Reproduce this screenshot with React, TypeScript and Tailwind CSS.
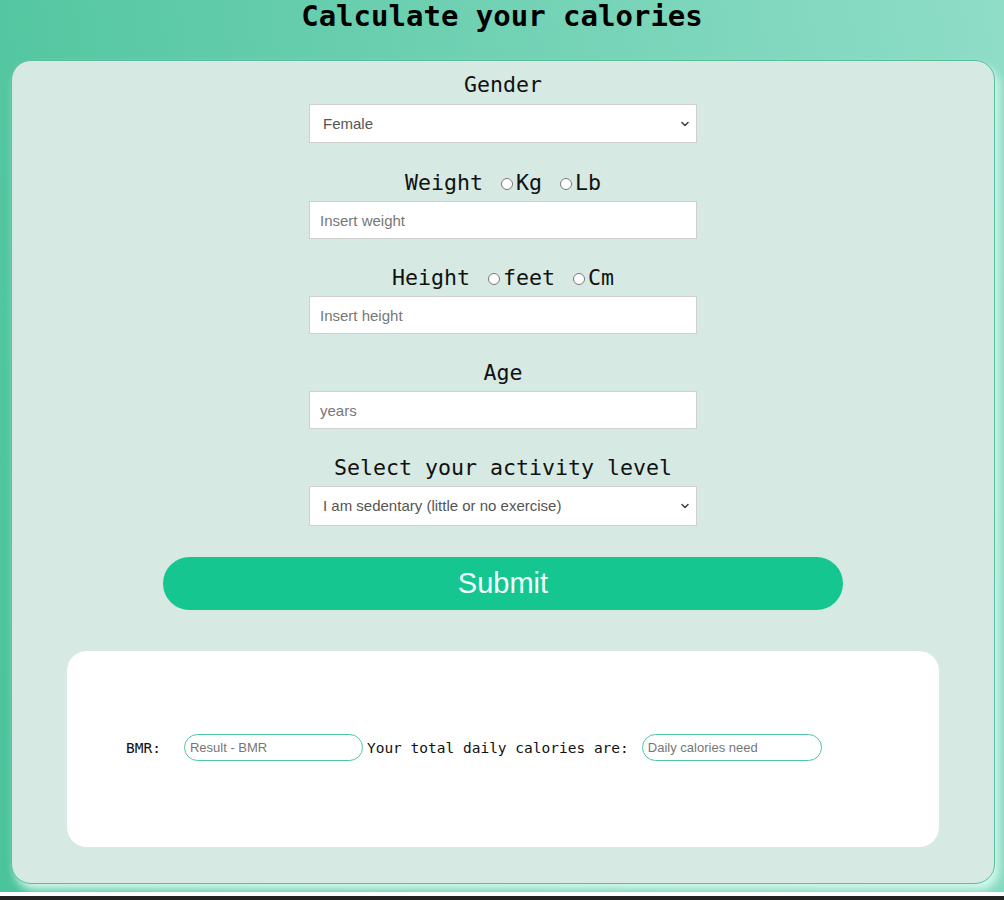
import React from 'react';

const mono = "font-['DejaVu_Sans_Mono',monospace]";
const sans = "font-['Liberation_Sans',Arial,sans-serif]";

const Chevron: React.FC = () => (
  <svg
    className="pointer-events-none absolute right-[7px] top-1/2 -translate-y-1/2"
    width="10"
    height="10"
    viewBox="0 0 10 10"
    fill="none"
  >
    <path d="M2 3.5 L5 6.5 L8 3.5" stroke="#444" strokeWidth="1.6" strokeLinecap="round" strokeLinejoin="round" />
  </svg>
);

const Radio: React.FC<{ name: string; label: string }> = ({ name, label }) => (
  <label className="inline-flex items-center">
    <input type="radio" name={name} className="m-0 ml-[5px] mr-[3px] h-[12px] w-[12px] translate-y-[1px]" />
    <span>{label}</span>
  </label>
);

const App: React.FC = () => {
  return (
    <div className="flex h-[900px] flex-col overflow-hidden">
      <div className="h-[892px] shrink-0 overflow-hidden bg-linear-[80deg] from-[#4bc39b] to-[#8fddc7]">
        <h1 className={`${mono} m-0 h-[30px] pt-[1px] text-center text-[29px] font-bold leading-[30px] text-black`}>
          Calculate your calories
        </h1>

        <div className="ml-[11px] mt-[30px] h-[824px] w-[984px] rounded-[20px] border border-[#5bbf9d] bg-[#d6e9e3] pt-[11px] shadow-[4px_6px_8px_rgba(215,250,238,0.95)]">
          <div className={`${mono} flex flex-col items-center text-[21.6px] leading-[26px] text-[#111]`}>
            {/* Gender */}
            <div>Gender</div>
            <div className="relative mt-[6px]">
              <select className={`${sans} h-[39px] w-[388px] appearance-none border border-[#cfcfcf] bg-white pl-[13px] text-[15px] text-[#555] outline-none`}>
                <option>Female</option>
                <option>Male</option>
              </select>
              <Chevron />
            </div>

            {/* Weight */}
            <div className="mt-[27px] flex items-center">
              <span>Weight</span>
              <span className="w-[13px]" />
              <Radio name="weight" label="Kg" />
              <span className="w-[13px]" />
              <Radio name="weight" label="Lb" />
            </div>
            <input
              placeholder="Insert weight"
              className={`${sans} mt-[5px] h-[38px] w-[388px] border border-[#cfcfcf] bg-white pl-[10px] text-[15px] text-[#333] outline-none placeholder:text-[#777]`}
            />

            {/* Height */}
            <div className="mt-[26px] flex items-center">
              <span>Height</span>
              <span className="w-[13px]" />
              <Radio name="height" label="feet" />
              <span className="w-[13px]" />
              <Radio name="height" label="Cm" />
            </div>
            <input
              placeholder="Insert height"
              className={`${sans} mt-[5px] h-[38px] w-[388px] border border-[#cfcfcf] bg-white pl-[10px] text-[15px] text-[#333] outline-none placeholder:text-[#777]`}
            />

            {/* Age */}
            <div className="mt-[26px]">Age</div>
            <input
              placeholder="years"
              className={`${sans} mt-[5px] h-[38px] w-[388px] border border-[#cfcfcf] bg-white pl-[10px] text-[15px] text-[#333] outline-none placeholder:text-[#777]`}
            />

            {/* Activity */}
            <div className="mt-[26px]">Select your activity level</div>
            <div className="relative mt-[5px]">
              <select className={`${sans} h-[40px] w-[388px] appearance-none border border-[#cfcfcf] bg-white pl-[13px] text-[15px] text-[#555] outline-none`}>
                <option>I am sedentary (little or no exercise)</option>
                <option>I am lightly active (light exercise 1-3 days/week)</option>
                <option>I am moderately active (moderate exercise 3-5 days/week)</option>
                <option>I am very active (hard exercise 6-7 days/week)</option>
                <option>I am super active (very hard exercise &amp; physical job)</option>
              </select>
              <Chevron />
            </div>

            <button
              className={`${sans} mt-[31px] h-[53px] w-[680px] rounded-full bg-[#16c690] text-[29px] leading-none text-[#f0fffb]`}
            >
              Submit
            </button>
          </div>

          {/* Results */}
          <div className="mx-auto mt-[41px] flex h-[196px] w-[872px] items-center rounded-[20px] bg-white pb-[4px] pl-[59px]">
            <div className={`${mono} flex items-center text-[14.5px] text-[#111]`}>
              <span className="translate-y-[2px]">BMR:</span>
              <input
                placeholder="Result - BMR"
                readOnly
                className={`${sans} ml-[23px] h-[27px] w-[179px] rounded-full border-[1.5px] border-[#4cc7a2] bg-white pl-[5px] text-[13px] outline-none placeholder:text-[#777]`}
              />
              <span className="ml-[4px] translate-y-[2px]">Your total daily calories are:</span>
              <input
                placeholder="Daily calories need"
                readOnly
                className={`${sans} ml-[13px] h-[27px] w-[180px] rounded-full border-[1.5px] border-[#4cc7a2] bg-white pl-[5px] text-[13px] outline-none placeholder:text-[#777]`}
              />
            </div>
          </div>
        </div>
      </div>
      <div className="h-[4px] shrink-0 bg-white" />
      <div className="flex-1 bg-[#222]" />
    </div>
  );
};

export default App;
